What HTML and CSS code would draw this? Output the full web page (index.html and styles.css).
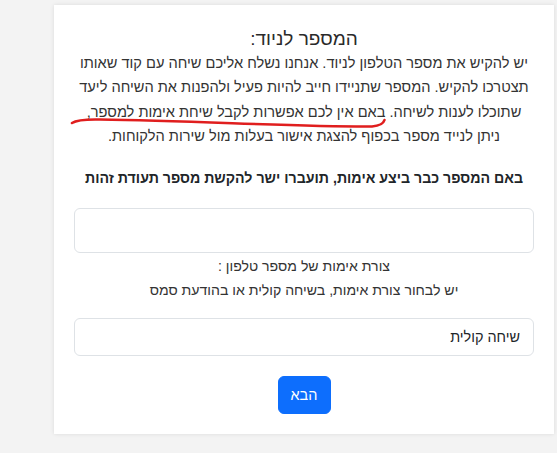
FILE: index.html
```html
<!DOCTYPE html>
<html lang="he">
<head>
<meta charset="utf-8">
<link rel="stylesheet" href="styles.css">
</head>
<body>
<div class="card" dir="rtl">
  <h2 class="title">המספר לניוד:</h2>
  <p class="intro">יש להקיש את מספר הטלפון לניוד. אנחנו נשלח אליכם שיחה עם קוד שאותו<br>תצטרכו להקיש. המספר שתניידו חייב להיות פעיל ולהפנות את השיחה ליעד<br>שתוכלו לענות לשיחה. באם אין לכם אפשרות לקבל שיחת אימות למספר,<br>ניתן לנייד מספר בכפוף להצגת אישור בעלות מול שירות הלקוחות.</p>
  <p class="notice">באם המספר כבר ביצע אימות, תועברו ישר להקשת מספר תעודת זהות</p>
  <input class="field field-tall" type="text">
  <p class="hint">צורת אימות של מספר טלפון :<br>יש לבחור צורת אימות, בשיחה קולית או בהודעת סמס</p>
  <div class="field select">שיחה קולית</div>
  <div class="actions"><button class="btn">הבא</button></div>
</div>
<svg class="scribble" width="557" height="453" viewBox="0 0 557 453">
  <path d="M72 123 Q 78 119 100 119.5 C 200 121, 300 127, 372 126.5 Q 383 125.5 384.5 120" fill="none" stroke="#e01e1e" stroke-width="2.6" stroke-linecap="round"/>
</svg>
</body>
</html>
```
FILE: styles.css
```css
html, body {
  margin: 0;
  padding: 0;
}
body {
  background: #f3f3f3;
  font-family: "Liberation Sans", Arial, sans-serif;
  color: #333;
  width: 557px;
  height: 453px;
  overflow: hidden;
  position: relative;
}
.card {
  margin: 5px 0 0 54px;
  width: 500px;
  box-sizing: border-box;
  background: #fff;
  box-shadow: 0 0 4px rgba(0,0,0,0.10);
  padding: 22px 20px 20px;
  text-align: center;
}
.title {
  margin: 0;
  font-size: 19px;
  font-weight: normal;
  line-height: 24px;
  color: #2a2a2a;
}
.intro {
  margin: 0 -4px;
  font-size: 14.6px;
  line-height: 24.3px;
  white-space: nowrap;
}
.notice {
  margin: 18px 0 0;
  font-size: 14.2px;
  font-weight: bold;
  line-height: 24px;
  color: #212529;
}
.field {
  display: block;
  width: 100%;
  box-sizing: border-box;
  border: 1px solid #dee2e6;
  border-radius: 6px;
  background: #fff;
  font-family: inherit;
  font-size: 14.4px;
  color: #212529;
}
.field-tall {
  margin-top: 18px;
  height: 45px;
}
.hint {
  margin: 2px 0 0;
  font-size: 14.1px;
  line-height: 23.5px;
  color: #333;
}
.select {
  margin-top: 16px;
  height: 38px;
  line-height: 36px;
  padding: 0 13px;
  text-align: right;
}
.actions {
  display: flex;
  justify-content: center;
  margin-top: 20px;
}
.btn {
  background: #0d6efd;
  color: #fff;
  border: 1px solid #0d6efd;
  border-radius: 6px;
  font-family: inherit;
  font-size: 14.5px;
  height: 38px;
  width: 53px;
  padding: 0;
}
.scribble {
  position: absolute;
  left: 0;
  top: 0;
  pointer-events: none;
}
```
